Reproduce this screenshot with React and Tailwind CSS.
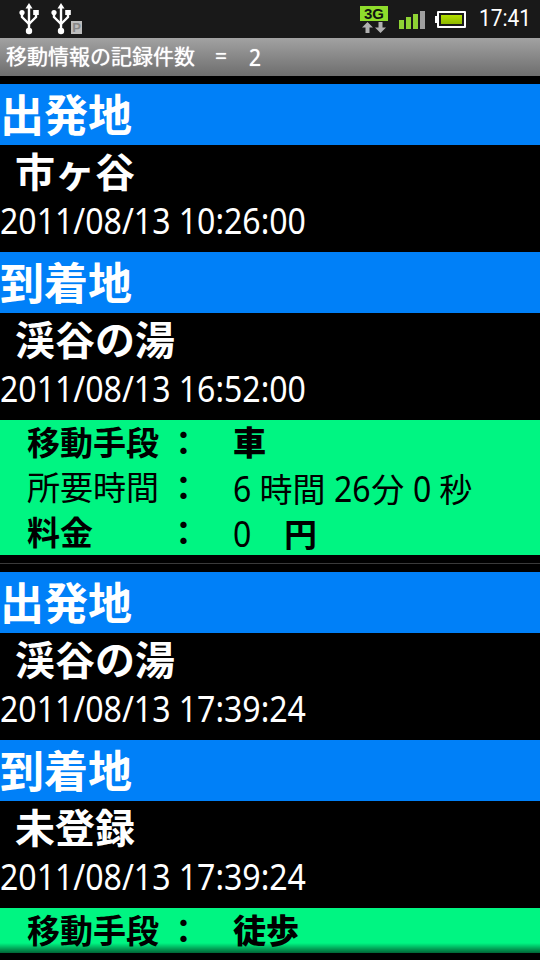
const FONT = "font-['Noto_Sans','Noto_Sans_CJK_JP',sans-serif]";

function Usb({ className }) {
  return (
    <svg viewBox="0 0 20 32" className={className} fill="none" stroke="white" strokeWidth="2.4">
      <path d="M10 4V27" />
      <path d="M10 0L13.5 5.5H6.5Z" fill="white" stroke="none" />
      <circle cx="10" cy="28" r="3.2" fill="white" stroke="none" />
      <path d="M3 10V14L10 21" />
      <path d="M17 10V14L10 21" />
      <circle cx="3" cy="9.5" r="2.6" fill="white" stroke="none" />
      <rect x="14.2" y="7" width="5.6" height="5" fill="white" stroke="none" />
    </svg>
  );
}

function StatusBar() {
  return (
    <div className="h-[38px] bg-[#191919] flex items-center">
      <Usb className="w-[20px] h-[32px] ml-[19px] mb-[1px]" />
      <Usb className="w-[20px] h-[32px] ml-[12px] mb-[1px]" />
      <div className="w-[11px] h-[13px] mt-[16px] bg-[#bdbdbd] flex items-center justify-center text-[13px] leading-none font-bold text-[#888] font-['Liberation_Sans',sans-serif]">
        P
      </div>
      <div className="ml-auto w-[28px] flex flex-col items-center">
        <div className="w-[28px] h-[15px] bg-[#8fdc2c] text-[#111] text-[15px] leading-[15px] font-bold text-center font-['Liberation_Sans',sans-serif]">
          3G
        </div>
        <svg viewBox="0 0 26 11" className="w-[26px] h-[11px] mt-[1px]">
          <path d="M6.5 0L12 5.5H8.5V11H4.5V5.5H1Z" fill="#b0b0b0" />
          <path d="M19.5 11L14 5.5H17.5V0H21.5V5.5H25Z" fill="#b0b0b0" />
        </svg>
      </div>
      <div className="ml-[11px] flex items-end gap-[2px] h-[19px]">
        <div className="w-[5px] h-[9px] bg-[#8fd334]" />
        <div className="w-[5px] h-[12px] bg-[#8fd334]" />
        <div className="w-[5px] h-[15px] bg-[#8fd334]" />
        <div className="w-[5px] h-[18px] bg-[#a0a0a0]" />
      </div>
      <div className="ml-[10px] flex items-center">
        <div className="w-[2px] h-[7px] bg-white" />
        <div className="w-[29px] h-[17px] border-2 border-white rounded-[1px] p-[2px]">
          <div className="w-full h-full bg-gradient-to-b from-[#b4e000] to-[#8fb800]" />
        </div>
      </div>
      <div className="ml-[13px] mr-[12px] w-[49px] whitespace-nowrap">
        <div className="inline-block origin-left scale-x-[0.87] text-white text-[24px] leading-none font-['Roboto',sans-serif]">
          17:41
        </div>
      </div>
    </div>
  );
}

function TitleBar() {
  return (
    <div className={`h-[38px] bg-gradient-to-b from-[#a2a2a2] to-[#6e6e6e] flex items-center pl-[6px] pb-[1px] text-white text-[21px] leading-none [text-shadow:0_0_1px_#fff] ${FONT}`}>
      <span>移動情報の記録件数</span>
      <span className="ml-[20px]">=</span>
      <span className="ml-[22px] inline-block origin-left scale-x-[0.87] text-[24px]">2</span>
    </div>
  );
}

function Place({ label, name, time }) {
  return (
    <div>
      <div className="h-[61px] bg-[#0080f8] flex items-center text-white text-[44px] font-bold leading-none">{label}</div>
      <div className="h-[107px] flex flex-col text-white">
        <div className="h-[54px] flex items-center pl-[15px] text-[40px] font-bold leading-none">{name}</div>
        <div className="h-[41px] flex items-center whitespace-nowrap">
          <span className="inline-block origin-left scale-x-[0.866] text-[37px] leading-none">{time}</span>
        </div>
      </div>
    </div>
  );
}

function Num({ className, children }) {
  return (
    <span className={`inline-block origin-left scale-x-[0.866] text-[37px] leading-none font-normal ${className}`}>
      {children}
    </span>
  );
}

function InfoRow({ label, value, bold }) {
  return (
    <div className={`h-[45px] grid grid-cols-[140px_66px_1fr] items-center text-[33px] leading-none text-black ${bold ? "font-bold" : ""}`}>
      <span className="whitespace-nowrap">{label}</span>
      <span className="font-bold">：</span>
      <span className="whitespace-nowrap">{value}</span>
    </div>
  );
}

function Info({ rows }) {
  return (
    <div className="bg-[#00f582] pl-[27px]">
      {rows.map((r) => (
        <InfoRow key={r.label} {...r} />
      ))}
    </div>
  );
}

export default function App() {
  return (
    <div className={`relative w-[540px] h-[960px] overflow-hidden bg-black ${FONT}`}>
      <StatusBar />
      <TitleBar />
      <div className="pt-[8px]">
        <Place label="出発地" name="市ヶ谷" time="2011/08/13 10:26:00" />
        <Place label="到着地" name="渓谷の湯" time="2011/08/13 16:52:00" />
        <Info
          rows={[
            { label: "移動手段", value: <b>車</b>, bold: true },
            {
              label: "所要時間",
              value: (
                <>
                  <Num className="w-[18px]">6</Num> 時間 <Num className="w-[37px]">26</Num>分 <Num className="w-[18px]">0</Num> 秒
                </>
              ),
            },
            {
              label: "料金",
              value: (
                <>
                  <Num className="w-[18px]">0</Num>
                  <span className="ml-[33px]">円</span>
                </>
              ),
              bold: true,
            },
          ]}
        />
        <div className="h-[17px] flex items-center">
          <div className="w-full h-[1px] bg-[#3a3a3a]" />
        </div>
        <Place label="出発地" name="渓谷の湯" time="2011/08/13 17:39:24" />
        <Place label="到着地" name="未登録" time="2011/08/13 17:39:24" />
        <Info rows={[{ label: "移動手段", value: <b>徒歩</b>, bold: true }]} />
      </div>
      <div className="absolute left-0 right-0 bottom-0 h-[17px] bg-gradient-to-b from-transparent to-black" />
    </div>
  );
}
